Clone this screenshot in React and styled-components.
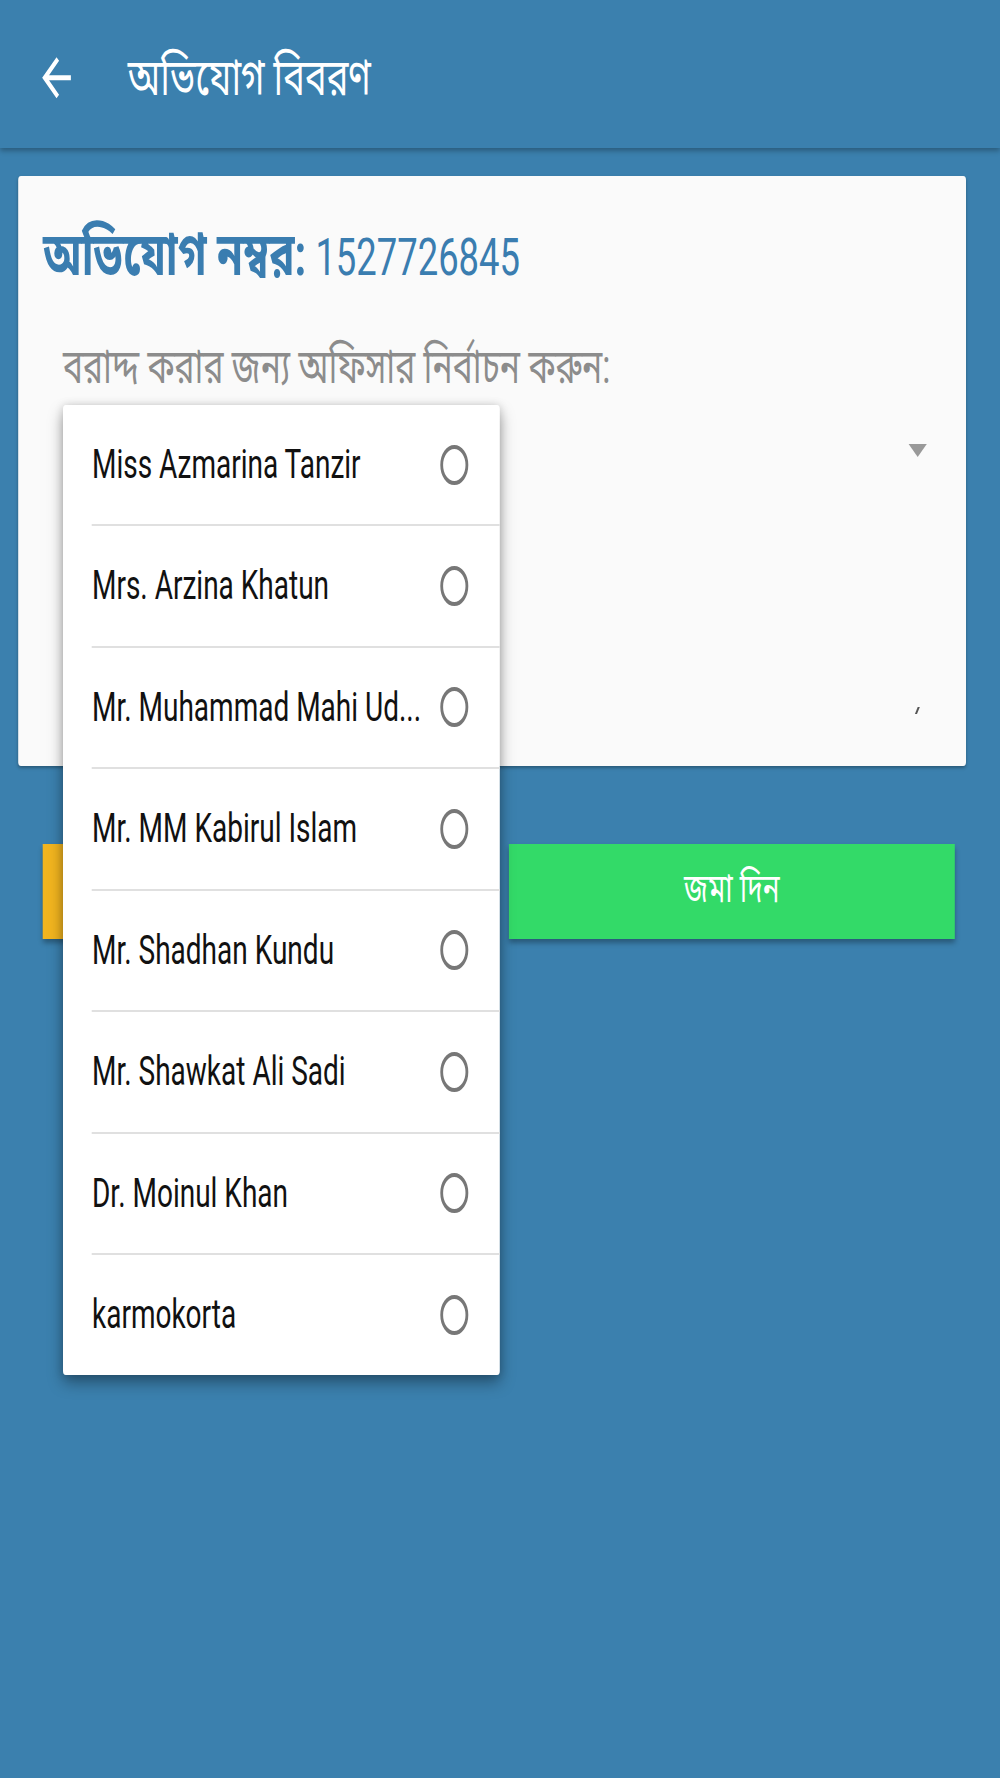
import styled, { createGlobalStyle } from 'styled-components';

// the screenshot is squeezed sideways, so the screen is laid out wide and pressed to 1000px
const SQUEEZE = 0.7;
const STAGE_WIDTH = 1000 / SQUEEZE;

const officers = [
  'Miss Azmarina Tanzir',
  'Mrs. Arzina Khatun',
  'Mr. Muhammad Mahi Ud...',
  'Mr. MM Kabirul Islam',
  'Mr. Shadhan Kundu',
  'Mr. Shawkat Ali Sadi',
  'Dr. Moinul Khan',
  'karmokorta',
];

const GlobalStyle = createGlobalStyle`
  html, body {
    margin: 0;
    padding: 0;
    overflow: hidden;
    background: #3b80ae;
  }
  body {
    font-family: Roboto, "Noto Sans Bengali", "Lohit Bengali", "Noto Sans", sans-serif;
  }
`;

const App = () => (
  <>
    <GlobalStyle />
    <Stage>
      <Header>
        <BackIcon viewBox="0 0 24 24">
          <path d="M20 11H7.83l5.59-5.59L12 4l-8 8 8 8 1.41-1.41L7.83 13H20v-2z" />
        </BackIcon>
        <Title>অভিযোগ বিবরণ</Title>
      </Header>

      <Main>
        <Card>
          <Heading>
            <strong>অভিযোগ নম্বর:</strong> 1527726845
          </Heading>
          <Label>বরাদ্দ করার জন্য অফিসার নির্বাচন করুন:</Label>
          <SelectRow>
            <Caret />
          </SelectRow>
          <NoteArea>
            <ResizeMark />
          </NoteArea>
        </Card>

        <ButtonRow>
          <ActionButton $bg="#f2b51f">বাতিল</ActionButton>
          <ActionButton $bg="#33da68">জমা দিন</ActionButton>
        </ButtonRow>
      </Main>

      <Popup>
        {officers.map((name) => (
          <Option key={name}>
            <OptionText>{name}</OptionText>
            <Radio />
          </Option>
        ))}
      </Popup>
    </Stage>
  </>
);

export default App;

const Stage = styled.div`
  position: relative;
  width: ${STAGE_WIDTH}px;
  min-height: 1778px;
  background: #3b80ae;
  transform: scaleX(${SQUEEZE});
  transform-origin: 0 0;
`;

const Header = styled.header`
  position: relative;
  z-index: 1;
  box-sizing: border-box;
  height: 148px;
  padding: 8px 0 0 50px;
  display: flex;
  align-items: center;
  background: #3b80ae;
  box-shadow: 0 3px 6px rgba(0, 0, 0, 0.28);
`;

const BackIcon = styled.svg`
  width: 61.5px;
  height: 61.5px;
  fill: #fff;
  flex: none;
`;

const Title = styled.h1`
  margin: 0 0 0 71px;
  color: #fff;
  font-size: 52px;
  font-weight: 400;
  line-height: 60px;
`;

const Main = styled.main`
  padding: 28px 48.6px 0 25.7px;
`;

const Card = styled.section`
  box-sizing: border-box;
  height: 590px;
  padding: 47px 56px 24px 35.7px;
  display: flex;
  flex-direction: column;
  background: #fafafa;
  border-radius: 4px;
  box-shadow: 0 2px 4px rgba(0, 0, 0, 0.3);
`;

const Heading = styled.h2`
  margin: 0;
  color: #3a7db0;
  font-size: 52px;
  font-weight: 400;
  line-height: 64px;
  white-space: nowrap;
  strong {
    font-size: 60px;
    font-weight: 700;
  }
`;

const Label = styled.p`
  margin: 47px 0 0;
  padding-left: 28.6px;
  color: #8c8c8c;
  font-size: 48px;
  line-height: 60px;
  white-space: nowrap;
`;

const SelectRow = styled.div`
  height: 90px;
  padding-top: 8px;
  display: flex;
  justify-content: flex-end;
  align-items: center;
`;

const Caret = styled.span`
  width: 0;
  height: 0;
  border-left: 13px solid transparent;
  border-right: 13px solid transparent;
  border-top: 13px solid #999;
`;

const NoteArea = styled.div`
  position: relative;
  flex: 1;
`;

// tiny resize grip of the text field
const ResizeMark = styled.span`
  position: absolute;
  right: 12px;
  bottom: 28px;
  width: 3px;
  height: 7px;
  background: #555;
  transform: skewX(-30deg);
`;

const ButtonRow = styled.div`
  display: flex;
  gap: 28.6px;
  padding: 78px 0 0 35.7px;
`;

const ActionButton = styled.button`
  width: 637px;
  height: 95px;
  border: none;
  border-radius: 0;
  background: ${(p) => p.$bg};
  color: #fff;
  font-family: inherit;
  font-size: 40px;
  box-shadow: 0 4px 6px rgba(0, 0, 0, 0.3);
`;

const Popup = styled.ul`
  position: absolute;
  z-index: 2;
  top: 405px;
  left: 90px;
  width: 624px;
  margin: 0;
  padding: 0;
  list-style: none;
  background: #fff;
  border-radius: 4px;
  box-shadow: 0 8px 18px rgba(0, 0, 0, 0.35), 0 0 10px rgba(0, 0, 0, 0.15);
`;

const Option = styled.li`
  box-sizing: border-box;
  height: 119px;
  margin-left: 41.4px;
  padding-right: 45.4px;
  display: flex;
  align-items: center;
  justify-content: space-between;
  color: #111;
  font-size: 40px;
  & + & {
    height: 121.5px;
    border-top: 2.5px solid #e0e0e0;
  }
`;

const OptionText = styled.span`
  white-space: nowrap;
`;

const Radio = styled.span`
  box-sizing: border-box;
  width: 40px;
  height: 40px;
  flex: none;
  border: 4px solid #777;
  border-radius: 50%;
`;
